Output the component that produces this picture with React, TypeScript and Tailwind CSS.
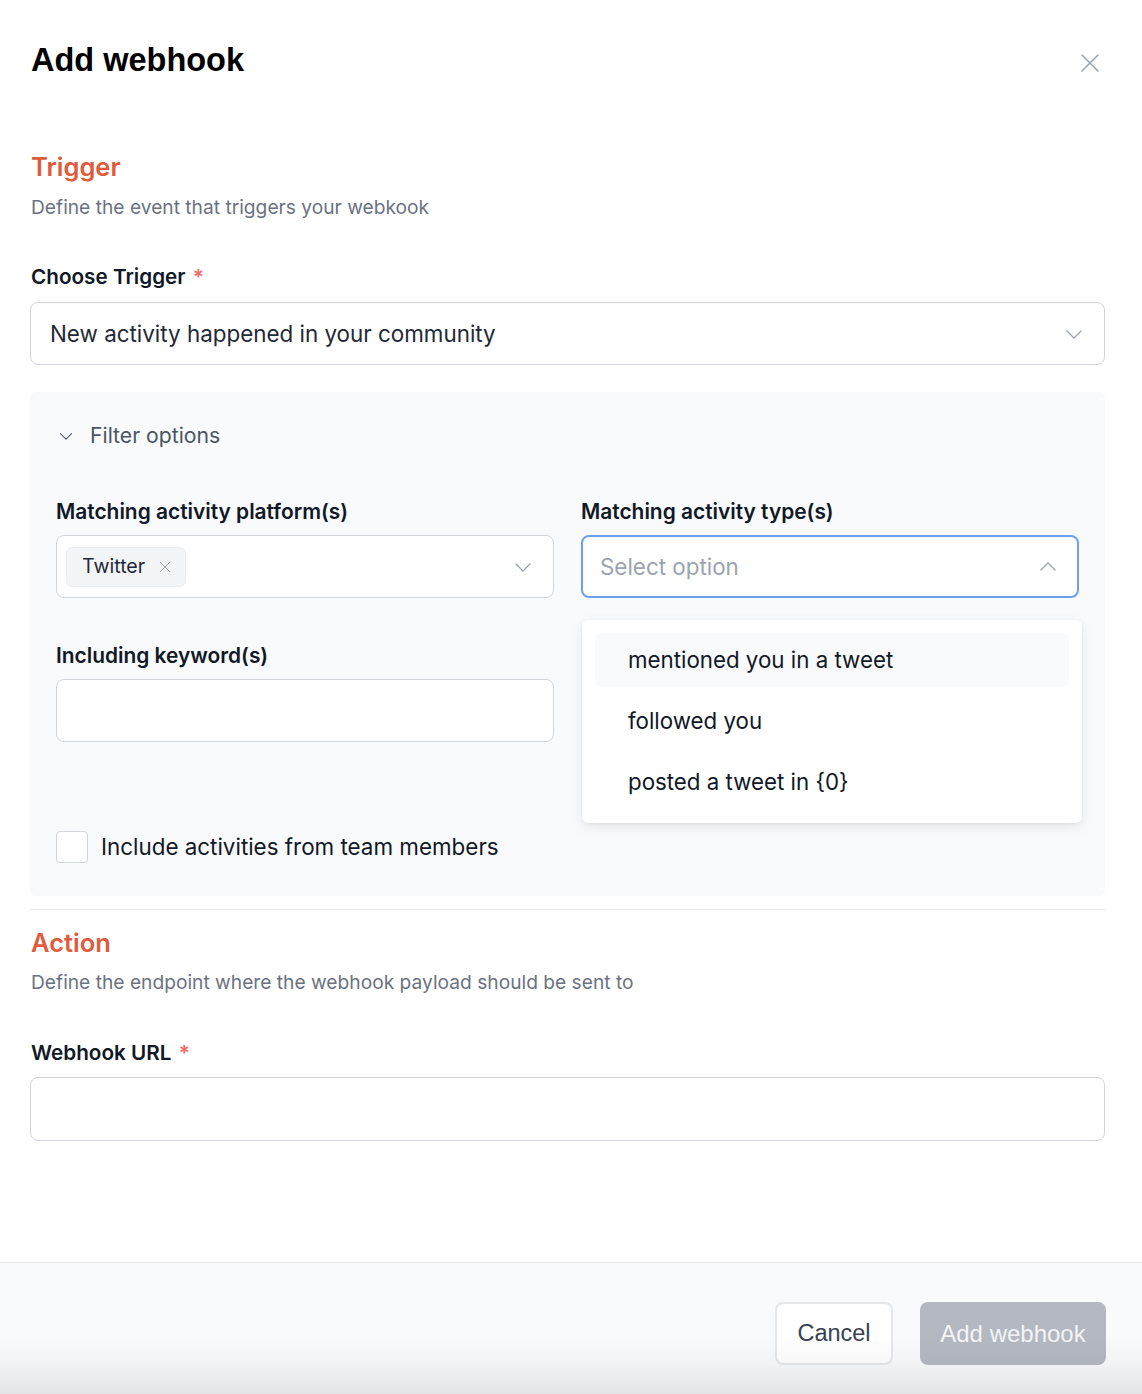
import React from "react";

function ChevronDown({ className = "" }: { className?: string }) {
  return (
    <svg className={className} viewBox="0 0 20 20" fill="none" stroke="currentColor" strokeWidth="1.3" strokeLinecap="round" strokeLinejoin="round">
      <path d="M3 7l7 7 7-7" />
    </svg>
  );
}
function ChevronUp({ className = "" }: { className?: string }) {
  return (
    <svg className={className} viewBox="0 0 20 20" fill="none" stroke="currentColor" strokeWidth="1.3" strokeLinecap="round" strokeLinejoin="round">
      <path d="M3 13l7-7 7 7" />
    </svg>
  );
}
function XIcon({ className = "", sw = 1.5 }: { className?: string; sw?: number }) {
  return (
    <svg className={className} viewBox="0 0 20 20" fill="none" stroke="currentColor" strokeWidth={sw} strokeLinecap="round">
      <path d="M2 2l16 16M18 2L2 18" />
    </svg>
  );
}

export default function App() {
  return (
    <div className="relative w-full min-h-[1394px] bg-white flex flex-col font-['Inter','Noto_Sans',sans-serif] text-[#111827]">
      <div className="pl-[30px] pr-[37px] flex-1">
        {/* header */}
        <div className="mt-[40px] h-[40px] flex items-center justify-between">
          <h1 className="pl-[1px] text-[32.5px] leading-[40px] font-bold text-black font-['Liberation_Sans','Arial',sans-serif]">Add webhook</h1>
          <button className="mt-[6px] mr-[5px] w-[20px] h-[20px] text-[#9ca3af]">
            <XIcon className="w-[20px] h-[20px]" sw={1.6} />
          </button>
        </div>

        {/* Trigger */}
        <h2 className="mt-[71px] pl-[1px] text-[25.5px] leading-[32px] font-semibold text-[#df5b3b]">Trigger</h2>
        <p className="mt-[10px] pl-[1px] text-[19.2px] leading-[28px] text-[#6b7280]">Define the event that triggers your webkook</p>

        <div className="mt-[42px] pl-[1px] text-[20.7px] leading-[28px] font-semibold text-[#111827]">
          Choose Trigger <span className="text-[#ef6b6b] ml-[2px]">*</span>
        </div>
        <div className="mt-[11px] h-[63px] rounded-[8px] border border-[#d1d5db] bg-white flex items-center justify-between pl-[19px] pr-[20px]">
          <span className="text-[22.4px] text-[#1f2937]">New activity happened in your community</span>
          <ChevronDown className="w-[20px] h-[20px] text-[#9ca3af]" />
        </div>

        {/* filter panel */}
        <div className="mt-[27px] rounded-[6px] bg-[#f9fafb] px-[26px] pt-[30px] pb-[33px]">
          <div className="h-[28px] flex items-center gap-[16px] pl-[2px]">
            <ChevronDown className="w-[16px] h-[16px] text-[#4b5563]" />
            <span className="text-[21.2px] text-[#4b5563]">Filter options</span>
          </div>

          <div className="mt-[48px] grid grid-cols-2 gap-x-[27px]">
            <div>
              <div className="text-[20.9px] leading-[28px] font-semibold text-[#111827]">Matching activity platform(s)</div>
              <div className="mt-[9px] h-[63px] rounded-[8px] border border-[#d1d5db] bg-white flex items-center justify-between pl-[9px] pr-[20px]">
                <div className="h-[40px] rounded-[6px] bg-[#f3f4f6] border border-[#eceef1] flex items-center pl-[15px] pr-[14px] gap-[14px]">
                  <span className="text-[19.6px] text-[#1f2937]">Twitter</span>
                  <XIcon className="w-[12px] h-[12px] text-[#9ca3af]" sw={1.6} />
                </div>
                <ChevronDown className="w-[20px] h-[20px] text-[#9ca3af]" />
              </div>
            </div>
            <div className="relative">
              <div className="text-[20.9px] leading-[28px] font-semibold text-[#111827]">Matching activity type(s)</div>
              <div className="mt-[9px] h-[63px] rounded-[8px] border-2 border-[#6f9eea] bg-white flex items-center justify-between pl-[17px] pr-[19px]">
                <span className="text-[22.4px] text-[#9ca3af]">Select option</span>
                <ChevronUp className="w-[20px] h-[20px] text-[#9ca3af]" />
              </div>
              {/* dropdown */}
              <div className="absolute z-10 left-[1px] top-[122px] w-[500px] rounded-[6px] bg-white shadow-[0_4px_14px_rgba(0,0,0,0.08),0_1px_3px_rgba(0,0,0,0.06)] pt-[13px] pb-[14px] px-[13px] flex flex-col gap-[7px]">
                <div className="h-[54px] rounded-[6px] bg-[#f9fafb] flex items-center pl-[33px] text-[22.3px] text-[#111827]">mentioned you in a tweet</div>
                <div className="h-[54px] rounded-[6px] flex items-center pl-[33px] text-[22.3px] text-[#111827]">followed you</div>
                <div className="h-[54px] rounded-[6px] flex items-center pl-[33px] text-[22.3px] text-[#111827]">posted a tweet in {"{0}"}</div>
              </div>
            </div>
          </div>

          <div className="mt-[44px] grid grid-cols-2 gap-x-[27px]">
            <div>
              <div className="text-[20.9px] leading-[28px] font-semibold text-[#111827]">Including keyword(s)</div>
              <div className="mt-[9px] h-[63px] rounded-[8px] border border-[#d1d5db] bg-white" />
            </div>
            <div />
          </div>

          <div className="mt-[89px] h-[32px] flex items-center gap-[13px]">
            <div className="w-[32px] h-[32px] rounded-[4px] border border-[#d1d5db] bg-white" />
            <span className="text-[22.4px] text-[#111827]">Include activities from team members</span>
          </div>
        </div>

        <div className="mt-[13px] h-px bg-[#e5e7eb]" />

        {/* Action */}
        <h2 className="mt-[17px] pl-[1px] text-[25.5px] leading-[32px] font-semibold text-[#df5b3b]">Action</h2>
        <p className="mt-[9px] pl-[1px] text-[19.2px] leading-[28px] text-[#6b7280]">Define the endpoint where the webhook payload should be sent to</p>

        <div className="mt-[43px] pl-[1px] text-[20.7px] leading-[28px] font-semibold text-[#111827]">
          Webhook URL <span className="text-[#ef6b6b] ml-[2px]">*</span>
        </div>
        <div className="mt-[10px] h-[64px] rounded-[8px] border border-[#d1d5db] bg-white" />
      </div>

      {/* footer */}
      <div className="relative mt-[121px] h-[133px] border-t border-[#e5e7eb] bg-[#f9fafb] pr-[36px] pt-[39px] flex justify-end gap-[27px]">
        <button className="h-[63px] w-[118px] rounded-[8px] border-2 border-[#e5e7eb] bg-white text-[23.5px] text-[#374151] font-['Liberation_Sans','Arial',sans-serif]">Cancel</button>
        <button className="h-[63px] w-[186px] rounded-[8px] bg-[#b4b8c0] text-[24px] text-[#f3f4f6] font-['Liberation_Sans','Arial',sans-serif]">Add webhook</button>
        <div className="pointer-events-none absolute left-0 right-0 bottom-0 h-[60px] bg-[linear-gradient(to_bottom,rgba(0,0,0,0)_0%,rgba(0,0,0,0.03)_50%,rgba(0,0,0,0.09)_100%)]" />
      </div>
    </div>
  );
}
